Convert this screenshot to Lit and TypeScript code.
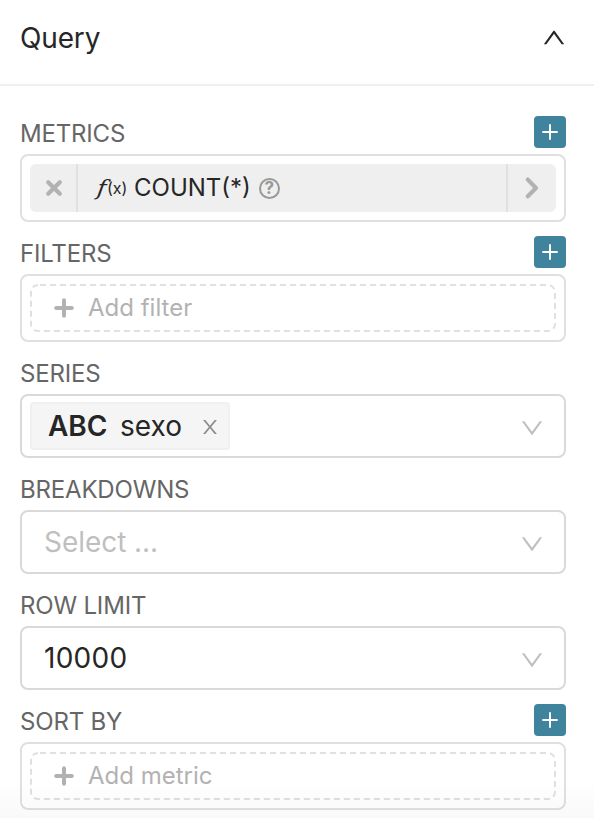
import { LitElement, html, css, nothing } from "lit";
import { customElement, property } from "lit/decorators.js";

const DOWN =
  "M884 256h-75c-5.1 0-9.9 2.5-12.9 6.6L512 654.2 227.9 262.6c-3-4.1-7.8-6.6-12.9-6.6h-75c-6.5 0-10.3 7.4-6.5 12.7l352.6 486.1c12.8 17.6 39 17.6 51.7 0l352.6-486.1c3.9-5.3.1-12.7-6.4-12.7z";
const CLOSE =
  "M563.8 512l262.5-312.9c4.4-5.2.7-13.1-6.1-13.1h-79.8c-4.7 0-9.2 2.1-12.3 5.7L511.6 449.8 295.1 191.7c-3-3.6-7.5-5.7-12.3-5.7H203c-6.8 0-10.5 7.9-6.1 13.1L459.4 512 196.9 824.9A7.95 7.95 0 0 0 203 838h79.8c4.7 0 9.2-2.1 12.3-5.7l216.5-258.1 216.5 258.1c3 3.6 7.5 5.7 12.3 5.7h79.8c6.8 0 10.5-7.9 6.1-13.1L563.8 512z";

@customElement("control-section")
export class ControlSection extends LitElement {
  @property() label = "";
  @property({ type: Boolean }) addable = false;

  static styles = css`
    :host { display: block; margin-bottom: 14px; }
    .head { display: flex; justify-content: space-between; height: 38px; }
    .label { font-size: 24px; line-height: 36px; color: #666; letter-spacing: -0.18px; white-space: nowrap; }
    .add { width: 32px; height: 32px; padding: 0; border: 0; border-radius: 4px; background: #40839c; display: block; }
    svg { display: block; }
  `;

  render() {
    return html`
      <div class="head">
        <span class="label">${this.label}</span>
        ${this.addable
          ? html`<button class="add" aria-label="Add">
              <svg width="32" height="32" stroke="#fff" stroke-width="2"><path d="M8.3 16H23.7M16 8.3V23.7" /></svg>
            </button>`
          : nothing}
      </div>
      <slot></slot>
    `;
  }
}

@customElement("app-root")
export class AppRoot extends LitElement {
  static styles = css`
    :host {
      display: block; position: relative; height: 818px; overflow: hidden;
      background: #fff; color: #262626; font-family: Inter, "Liberation Sans", sans-serif;
    }
    svg { display: block; flex: none; }
    * { box-sizing: border-box; }
    .header {
      height: 86px; border-bottom: 2px solid #f0f0f0; padding: 0 26px 8px 20px;
      display: flex; align-items: center; justify-content: space-between;
    }
    .title { font-size: 28px; line-height: 36px; letter-spacing: -0.15px; }
    .body { padding: 30px 28px 0 20px; }
    .box { height: 68px; border: 2px solid #e0e0e0; border-radius: 8px; padding: 8px; }
    .chip { height: 48px; display: flex; background: #efefef; border-radius: 6px; overflow: hidden; }
    .remove { width: 48px; border-right: 2px solid #e0e0e0; }
    .caret { width: 50px; border-left: 2px solid #e0e0e0; }
    .metric { flex: 1; display: flex; align-items: center; padding-left: 18px; }
    .fx { width: 38px; display: flex; align-items: center; padding-left: 1.5px; }
    .f { font: italic 21px/30px "DejaVu Serif", serif; width: 9.5px; transform: skewX(-8deg) scaleX(1.15); }
    .x { font-size: 16px; line-height: 24px; transform: translateY(-0.5px); }
    .name { font-size: 24px; line-height: 48px; }
    .help {
      margin-left: 8px; width: 21px; height: 21px; border: 2px solid #999; border-radius: 50%;
      color: #999; font-size: 17px; font-weight: 700; line-height: 17px; text-align: center;
    }
    .ghost { height: 48px; display: flex; align-items: center; padding-left: 24px; color: #b2b2b2; font-size: 24px; }
    .frame { border: 0; position: relative; }
    .dash { position: absolute; inset: 0; }
    .ghost-text { margin-left: 14px; line-height: 48px; }
    .select {
      height: 64px; border: 2px solid #d9d9d9; border-radius: 8px; padding: 0 18px 0 22px;
      display: flex; align-items: center; justify-content: space-between; font-size: 28px; color: #262626;
    }
    .select > svg { margin-top: 4px; }
    .tagged { padding-left: 8px; }
    .placeholder { color: #bfbfbf; letter-spacing: -0.05px; }
    .number { letter-spacing: 0.25px; }
    .tag {
      height: 48px; width: 200px; border: 2px solid #f0f0f0; border-radius: 4px; background: #f5f5f5;
      display: flex; align-items: center; padding-left: 16px;
    }
    .tag svg { margin-top: 2px; }
    .type { font-weight: 600; width: 72px; }
    .value { width: 79px; }
    .fade {
      position: absolute; left: 0; right: 0; bottom: 0; height: 40px; pointer-events: none;
      background: linear-gradient(rgba(0, 0, 0, 0), rgba(0, 0, 0, 0.025));
    }
  `;

  private down() {
    return html`<svg width="28" height="28" viewBox="-19 -19 1062 1062" fill="#bfbfbf"><path d=${DOWN} /></svg>`;
  }

  private ghost(text: string) {
    return html`<div class="box"><div class="ghost frame">
      <svg class="dash" width="526" height="48" fill="none" stroke="#e0e0e0" stroke-width="2">
        <rect x="1" y="1" width="524" height="46" rx="7" stroke-dasharray="6 4" stroke-dashoffset="-2" />
      </svg>
      <svg width="20" height="20" stroke="#b2b2b2" stroke-width="4" stroke-linecap="round"><path d="M2.2 10H17.8M10 2.2V17.8" /></svg>
      <span class="ghost-text">${text}</span>
    </div></div>`;
  }

  render() {
    return html`
      <div class="header">
        <span class="title">Query</span>
        <svg width="28" height="28" viewBox="-19 -19 1062 1062" fill="#262626"><path transform="matrix(1 0 0 -1 0 1004)" d=${DOWN} /></svg>
      </div>
      <div class="body">
        <control-section label="METRICS" addable>
          <div class="box"><div class="chip">
            <div class="remove">
              <svg width="46" height="48" stroke="#b2b2b2" stroke-width="4.2" stroke-linecap="round"><path d="M18.2 18.2L29.8 29.8M29.8 18.2L18.2 29.8" /></svg>
            </div>
            <div class="metric">
              <span class="fx"><span class="f">f</span><span class="x">(x)</span></span>
              <span class="name">COUNT(*)</span>
              <span class="help">?</span>
            </div>
            <div class="caret">
              <svg width="48" height="48" fill="none" stroke="#b2b2b2" stroke-width="4.2" stroke-linecap="round" stroke-linejoin="round"><path d="M19.8 15.6L28 24L19.8 32.2" /></svg>
            </div>
          </div></div>
        </control-section>
        <control-section label="FILTERS" addable>${this.ghost("Add filter")}</control-section>
        <control-section label="SERIES">
          <div class="select tagged">
            <div class="tag">
              <span class="type">ABC</span><span class="value">sexo</span>
              <svg width="22" height="22" viewBox="0 0 1024 1024" fill="#8c8c8c"><path d=${CLOSE} /></svg>
            </div>
            ${this.down()}
          </div>
        </control-section>
        <control-section label="BREAKDOWNS">
          <div class="select"><span class="placeholder">Select ...</span>${this.down()}</div>
        </control-section>
        <control-section label="ROW LIMIT">
          <div class="select"><span class="number">10000</span>${this.down()}</div>
        </control-section>
        <control-section label="SORT BY" addable>${this.ghost("Add metric")}</control-section>
      </div>
      <div class="fade"></div>
    `;
  }
}
